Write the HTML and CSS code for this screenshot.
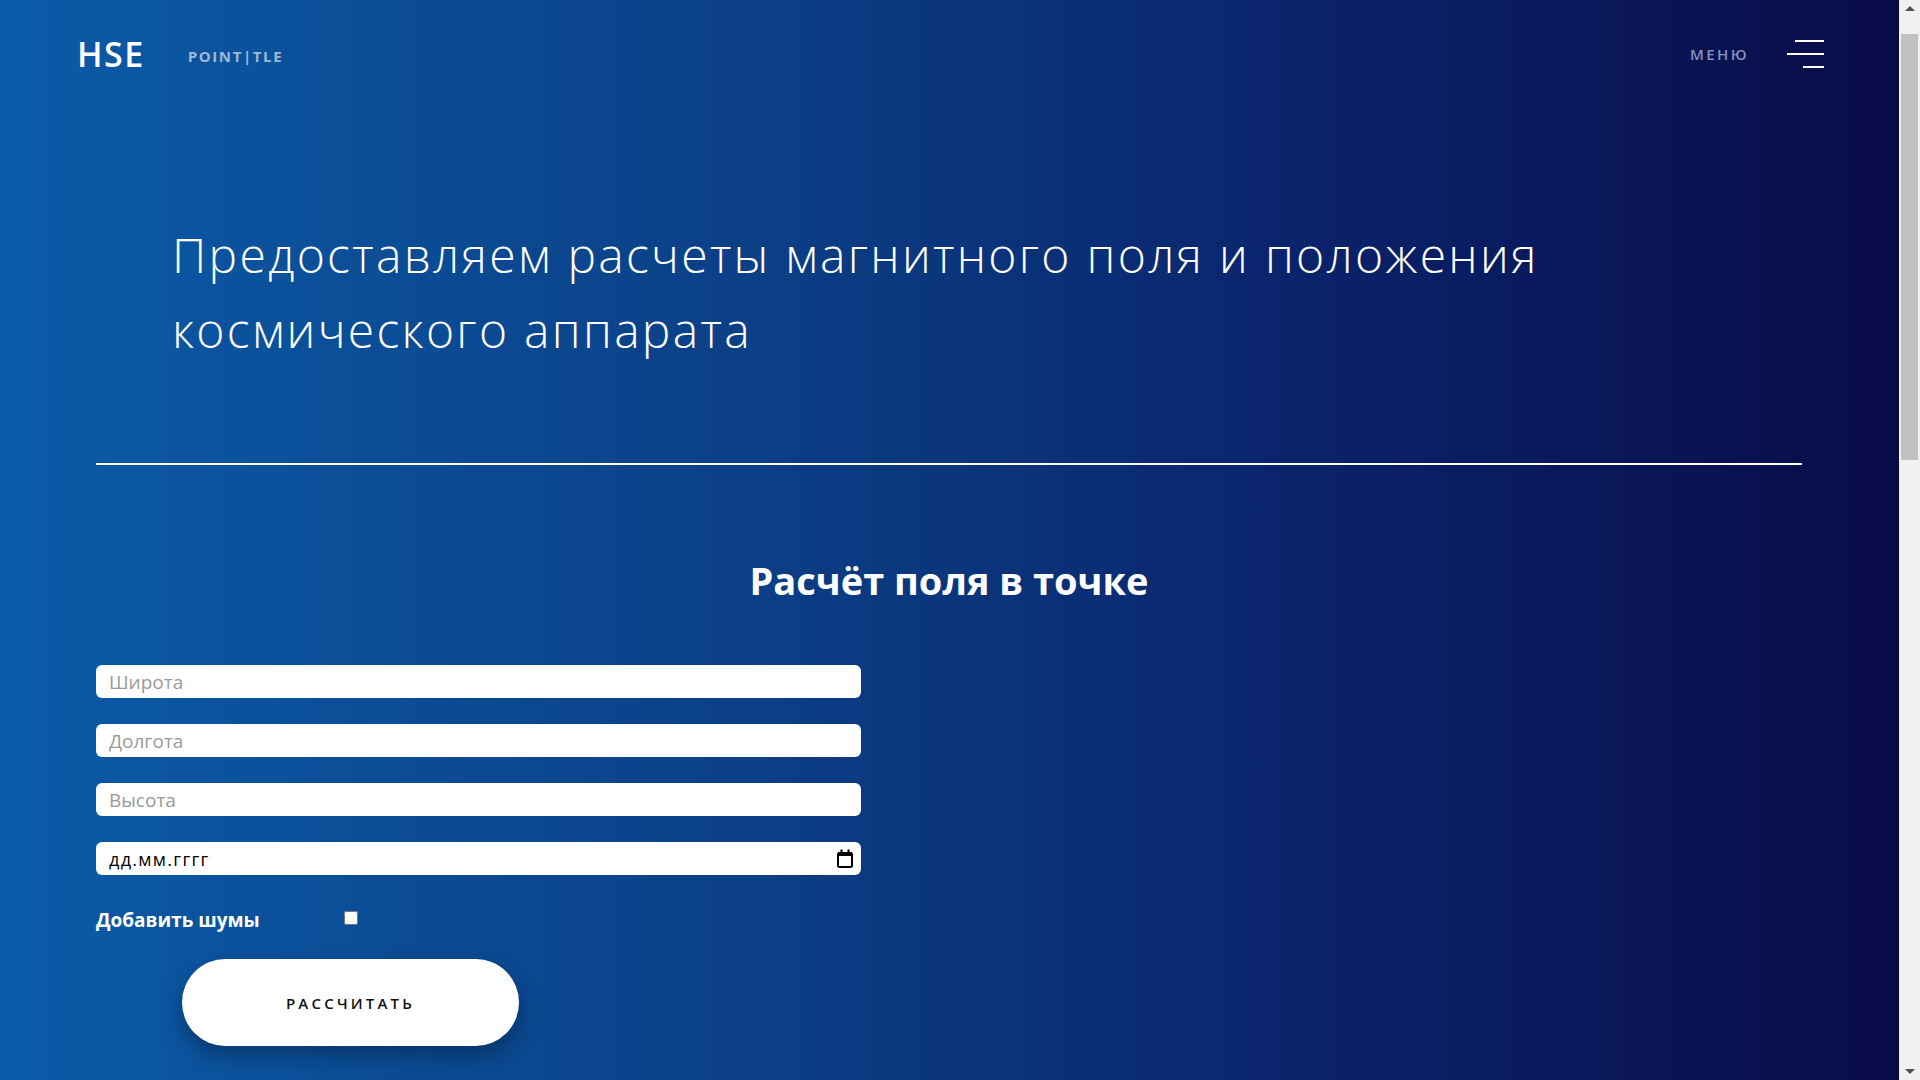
FILE: index.html
```html
<!DOCTYPE html>
<html lang="ru">
<head>
<meta charset="utf-8">
<title>HSE PointTLE</title>
<link rel="stylesheet" href="styles.css">
</head>
<body>
<div class="viewport">
  <header class="header">
    <div class="brand">
      <span class="logo">HSE</span>
      <span class="subtitle">POINT|TLE</span>
    </div>
    <div class="menu">
      <span class="menu-label">МЕНЮ</span>
      <span class="burger"><i class="b1"></i><i class="b2"></i><i class="b3"></i></span>
    </div>
  </header>

  <main class="page">
    <section class="hero">
      <h1 class="hero-title">Предоставляем расчеты магнитного поля и положения<br>космического аппарата</h1>
    </section>
    <hr class="divider">
    <section class="calc">
      <h2 class="calc-title">Расчёт поля в точке</h2>
      <form class="form">
        <input class="field" type="text" placeholder="Широта">
        <input class="field" type="text" placeholder="Долгота">
        <input class="field" type="text" placeholder="Высота">
        <div class="field date-field">
          <span class="date-text">дд.мм.гггг</span>
          <svg class="cal-icon" width="16" height="19" viewBox="0 0 16 19">
            <rect x="1" y="4" width="14" height="14" rx="1.5" fill="none" stroke="#000" stroke-width="2"/>
            <rect x="1" y="3" width="14" height="4" fill="#000"/>
            <rect x="3.5" y="0.5" width="2" height="3.5" fill="#000"/>
            <rect x="10.5" y="0.5" width="2" height="3.5" fill="#000"/>
          </svg>
        </div>
        <label class="noise">
          <span class="noise-label">Добавить шумы</span>
          <input class="noise-check" type="checkbox">
        </label>
        <button class="calc-btn" type="button">РАССЧИТАТЬ</button>
      </form>
    </section>
  </main>
</div>
<div class="scrollbar">
  <div class="sb-btn"><span class="arrow-up"></span></div>
  <div class="sb-track"><div class="sb-thumb"></div></div>
  <div class="sb-btn"><span class="arrow-down"></span></div>
</div>
</body>
</html>
```

FILE: styles.css
```css
html, body {
  height: 100%;
}

body {
  margin: 0;
  display: flex;
  overflow: hidden;
  font-family: "Open Sans", "Noto Sans", sans-serif;
  color: #fff;
}

.viewport {
  flex: 1;
  height: 100%;
  overflow: hidden;
  background: linear-gradient(90deg, #0b5ba8 0%, #0b3f86 40%, #0a226a 70%, #090b47 100%);
}

/* scrollbar */
.scrollbar {
  width: 21px;
  height: 100%;
  display: flex;
  flex-direction: column;
  background: #f1f1f1;
}

.sb-btn {
  height: 21px;
  display: flex;
  align-items: center;
  justify-content: center;
}

.arrow-up {
  width: 0;
  height: 0;
  border-left: 5px solid transparent;
  border-right: 5px solid transparent;
  border-bottom: 5px solid #505050;
  margin-top: -4px;
}

.arrow-down {
  width: 0;
  height: 0;
  border-left: 5px solid transparent;
  border-right: 5px solid transparent;
  border-top: 5px solid #505050;
  margin-top: 4px;
}

.sb-track {
  flex: 1;
  padding: 13px 2px 0;
}

.sb-thumb {
  height: 426px;
  background: #c1c1c1;
}

/* header */
.header {
  height: 108px;
  display: flex;
  align-items: center;
  justify-content: space-between;
  padding: 0 75px 0 77px;
}

.brand {
  display: flex;
  align-items: center;
  gap: 43px;
}

.logo {
  font-size: 34px;
  font-weight: 600;
  letter-spacing: 1.5px;
  color: #fff;
}

.subtitle {
  font-size: 15px;
  font-weight: 700;
  letter-spacing: 1.6px;
  color: rgba(255, 255, 255, 0.6);
  padding-top: 3px;
}

.menu {
  display: flex;
  align-items: center;
  gap: 38px;
}

.menu-label {
  font-size: 15px;
  font-weight: 600;
  letter-spacing: 2.4px;
  color: #8692b8;
}

.burger {
  display: flex;
  flex-direction: column;
  align-items: flex-end;
  gap: 11px;
  width: 37px;
}

.burger i {
  display: block;
  height: 2px;
  background: #fff;
}

.b1 { width: 29px; }
.b2 { width: 37px; }
.b3 { width: 21px; }

/* page */
.page {
  padding: 0 97px 0 96px;
}

.hero {
  padding: 109px 0 0 76px;
}

.hero-title {
  margin: 0;
  font-size: 48px;
  font-weight: 300;
  line-height: 75px;
  letter-spacing: 2.3px;
  color: #fff;
}

.divider {
  margin: 96px 0 0;
  border: 0;
  height: 2px;
  background: #fff;
}

.calc-title {
  margin: 91px 0 0;
  text-align: center;
  font-size: 38px;
  font-weight: 700;
  line-height: 49px;
}

.form {
  margin-top: 60px;
  width: 765px;
  display: flex;
  flex-direction: column;
  gap: 26px;
}

.field {
  box-sizing: border-box;
  height: 33px;
  width: 100%;
  border: 0;
  border-radius: 6px;
  background: #fff;
  padding: 0 13px;
  font-family: "Open Sans", sans-serif;
  font-size: 19px;
  color: #000;
  outline: none;
}

.field::placeholder {
  color: #9a9a9a;
}

.date-field {
  display: flex;
  align-items: center;
  justify-content: space-between;
  padding-right: 8px;
}

.date-text {
  font-size: 18px;
  letter-spacing: 1.3px;
  color: #000;
}

.cal-icon {
  display: block;
}

.noise {
  display: flex;
  align-items: center;
  margin-top: 6px;
}

.noise-label {
  width: 248px;
  font-size: 19px;
  font-weight: 700;
  color: #fff;
}

.noise-check {
  margin: -4px 0 0 0;
  width: 14px;
  height: 14px;
}

.calc-btn {
  align-self: flex-start;
  margin: 0 0 0 86px;
  width: 337px;
  height: 87px;
  border: 0;
  border-radius: 44px;
  background: #fff;
  box-shadow: 0 10px 22px rgba(0, 0, 0, 0.3);
  font-family: "Open Sans", sans-serif;
  font-size: 15px;
  font-weight: 600;
  letter-spacing: 3.2px;
  color: #111;
  cursor: pointer;
}
```
